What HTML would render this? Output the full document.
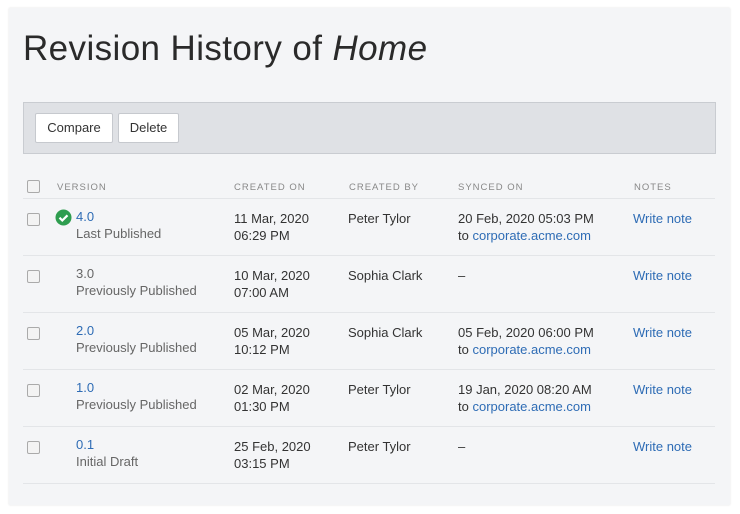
<!DOCTYPE html>
<html><head><style>
body{margin:0;width:740px;height:514px;background:#fff;font-family:"Liberation Sans","DejaVu Sans",sans-serif;position:relative;overflow:hidden}
.panel{position:absolute;left:9px;top:8px;width:721px;height:497px;background:#f4f5f7;box-shadow:0 0 2px rgba(0,0,0,.12)}
h1{position:absolute;left:23px;top:29px;margin:0;font-weight:normal;font-size:35px;color:#2a2a2a;letter-spacing:0.4px}
.bar{position:absolute;left:23px;top:102px;width:691px;height:50px;background:#dfe1e5;border:1px solid #c9ccd1}
.btn{position:absolute;top:10px;height:28px;background:#fff;border:1px solid #c6c9ce;border-radius:2px;font-size:13px;color:#333;line-height:28px;text-align:center}
.t{position:absolute;font-size:13px;color:#333;line-height:17px;white-space:nowrap}
.h{position:absolute;font-size:9.5px;color:#888;letter-spacing:1px;top:182px}
.a{color:#2e6cb5}
.g{color:#666}
.line{position:absolute;left:23px;width:692px;height:1px;background:#e3e5e8}
.cb{position:absolute;left:27px;width:11px;height:11px;border:1px solid #aaa;border-radius:2px;background:#f3f3f3}
</style></head><body>
<div class="panel"></div>
<h1>Revision History of <i>Home</i></h1>
<div class="bar">
<div class="btn" style="left:11px;width:76px">Compare</div>
<div class="btn" style="left:94px;width:59px">Delete</div>
</div>
<div class="cb" style="top:180px"></div>
<div class="h" style="left:57px">VERSION</div>
<div class="h" style="left:234px">CREATED ON</div>
<div class="h" style="left:349px">CREATED BY</div>
<div class="h" style="left:458px">SYNCED ON</div>
<div class="h" style="left:634px">NOTES</div>
<div class="line" style="top:198px"></div>

<div class="cb" style="top:213px"></div>
<svg style="position:absolute;left:55px;top:209px" width="17" height="17"><circle cx="8.5" cy="8.5" r="8" fill="#2e9d4f"/><path d="M4.5 8.7l2.8 2.8 5.2-5.2" stroke="#fff" stroke-width="2.2" fill="none"/></svg>
<div class="t" style="left:76px;top:208px"><span class="a">4.0</span><br><span class="g">Last Published</span></div>
<div class="t" style="left:234px;top:210px">11 Mar, 2020<br>06:29 PM</div>
<div class="t" style="left:348px;top:210px">Peter Tylor</div>
<div class="t" style="left:458px;top:210px">20 Feb, 2020 05:03 PM<br>to <span class="a">corporate.acme.com</span></div>
<div class="t a" style="left:633px;top:210px">Write note</div>
<div class="line" style="top:255px"></div>

<div class="cb" style="top:270px"></div>
<div class="t" style="left:76px;top:265px"><span class="g">3.0</span><br><span class="g">Previously Published</span></div>
<div class="t" style="left:234px;top:267px">10 Mar, 2020<br>07:00 AM</div>
<div class="t" style="left:348px;top:267px">Sophia Clark</div>
<div class="t" style="left:458px;top:267px">–</div>
<div class="t a" style="left:633px;top:267px">Write note</div>
<div class="line" style="top:312px"></div>

<div class="cb" style="top:327px"></div>
<div class="t" style="left:76px;top:322px"><span class="a">2.0</span><br><span class="g">Previously Published</span></div>
<div class="t" style="left:234px;top:324px">05 Mar, 2020<br>10:12 PM</div>
<div class="t" style="left:348px;top:324px">Sophia Clark</div>
<div class="t" style="left:458px;top:324px">05 Feb, 2020 06:00 PM<br>to <span class="a">corporate.acme.com</span></div>
<div class="t a" style="left:633px;top:324px">Write note</div>
<div class="line" style="top:369px"></div>

<div class="cb" style="top:384px"></div>
<div class="t" style="left:76px;top:379px"><span class="a">1.0</span><br><span class="g">Previously Published</span></div>
<div class="t" style="left:234px;top:381px">02 Mar, 2020<br>01:30 PM</div>
<div class="t" style="left:348px;top:381px">Peter Tylor</div>
<div class="t" style="left:458px;top:381px">19 Jan, 2020 08:20 AM<br>to <span class="a">corporate.acme.com</span></div>
<div class="t a" style="left:633px;top:381px">Write note</div>
<div class="line" style="top:426px"></div>

<div class="cb" style="top:441px"></div>
<div class="t" style="left:76px;top:436px"><span class="a">0.1</span><br><span class="g">Initial Draft</span></div>
<div class="t" style="left:234px;top:438px">25 Feb, 2020<br>03:15 PM</div>
<div class="t" style="left:348px;top:438px">Peter Tylor</div>
<div class="t" style="left:458px;top:438px">–</div>
<div class="t a" style="left:633px;top:438px">Write note</div>
<div class="line" style="top:483px"></div>
</body></html>
